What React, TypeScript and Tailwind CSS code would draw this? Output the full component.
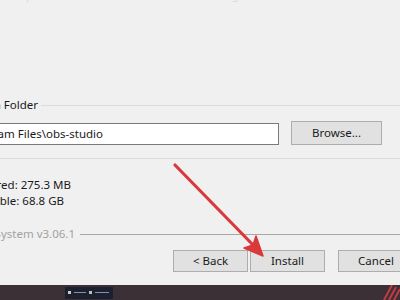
import React from 'react'

const font = { fontFamily: '"Noto Sans", "Open Sans", sans-serif' }

function Clipped({ end, text, className }: { end: number; text: string; className?: string }) {
  // text whose right end sits at `end` px and whose start runs off the left edge
  return (
    <div className={`flex justify-end overflow-visible whitespace-nowrap ${className ?? ''}`} style={{ width: end }}>
      <span className="shrink-0">{text}</span>
    </div>
  )
}

function WinButton({ label, w }: { label: string; w: string }) {
  return (
    <div
      className={`flex h-[22px] ${w} shrink-0 items-center justify-center border border-[#adadad] bg-[#e1e1e1] text-[11.5px] text-[#1a1a1a]`}
    >
      {label}
    </div>
  )
}

function RedArrow() {
  return (
    <svg className="pointer-events-none absolute left-0 top-0" width="400" height="300" viewBox="0 0 400 300">
      <line x1="175" y1="165" x2="255" y2="247" stroke="#d9393b" strokeWidth="3.2" strokeLinecap="round" />
      <polygon points="263,256 256,236 253,245 244,248" fill="#d9393b" stroke="#d9393b" strokeWidth="1.5" strokeLinejoin="round" />
    </svg>
  )
}

export default function App() {
  return (
    <div className="relative flex h-[300px] w-[400px] flex-col overflow-hidden bg-[#f0f0f0]" style={font}>
      <div className="flex h-[285px] flex-col">
        {/* sliver of the intro text that is cut by the top edge */}
        <div className="h-[5px] overflow-hidden">
          <div className="-mt-[13px] whitespace-nowrap pl-[2px] text-[11.5px] leading-[16px] text-[#dadada]">
            Setup will install OBS Studio in the following folder. To install in a different folder, click Browse
          </div>
        </div>

        {/* group box */}
        <div className="mt-[93px] flex flex-col">
          <div className="flex h-[14px] items-center text-[11.5px] text-[#1a1a1a]">
            <Clipped end={38} text="Destination Folder" />
            <div className="ml-[3px] h-px flex-1 bg-[#dcdcdc]" />
          </div>
          <div className="-ml-[100px] mt-[9px] flex items-end gap-[12px]">
            <div className="flex h-[22px] w-[379px] items-center border border-[#7a7a7a] bg-white text-[11.5px] text-[#1a1a1a]">
              <Clipped end={202} text="C:\Program Files\obs-studio" />
            </div>
            <div className="flex h-[24px] w-[91px] items-center justify-center border border-[#adadad] bg-[#e1e1e1] text-[11.5px] text-[#1a1a1a]">
              Browse...
            </div>
          </div>
          <div className="mt-[13px] h-px bg-[#dcdcdc]" />
        </div>

        <div className="mt-[18px] flex flex-col text-[11.5px] leading-[16px] text-[#1a1a1a]">
          <Clipped end={71} text="Space required: 275.3 MB" />
          <Clipped end={64} text="Space available: 68.8 GB" />
        </div>

        <div className="mt-[18px] flex h-[14px] items-center text-[11.5px] text-[#a2a2a2]">
          <Clipped end={75} text="Nullsoft Install System v3.06.1" />
          <div className="ml-[5px] h-px flex-1 bg-[#a8a8a8]" />
        </div>

        <div className="mt-[9px] flex pl-[173px]">
          <WinButton label="< Back" w="w-[75px]" />
          <div className="ml-[2px]">
            <WinButton label="Install" w="w-[75px]" />
          </div>
          <div className="ml-[13px]">
            <WinButton label="Cancel" w="w-[76px]" />
          </div>
        </div>
      </div>

      {/* desktop strip under the dialog */}
      <div className="flex h-[15px] items-center bg-[#3b3035]">
        <div className="ml-[65px] flex h-[12px] w-[48px] items-center gap-[3px] bg-[#1d2030] px-[3px]">
          <span className="h-[3px] w-[3px] bg-[#c9d0b8]" />
          <span className="h-px w-[12px] bg-[#8a90a0]" />
          <span className="h-[3px] w-[3px] bg-[#b8c4a8]" />
          <span className="h-px w-[14px] bg-[#8a90a0]" />
        </div>
        <div className="flex-1" />
        <svg width="22" height="15" viewBox="0 0 22 15" className="mr-[-2px]">
          <path d="M4 15 L12 0 M9 15 L16 2 M14 15 L20 4" stroke="#c43a44" strokeWidth="2" fill="none" />
        </svg>
      </div>

      <RedArrow />
    </div>
  )
}
